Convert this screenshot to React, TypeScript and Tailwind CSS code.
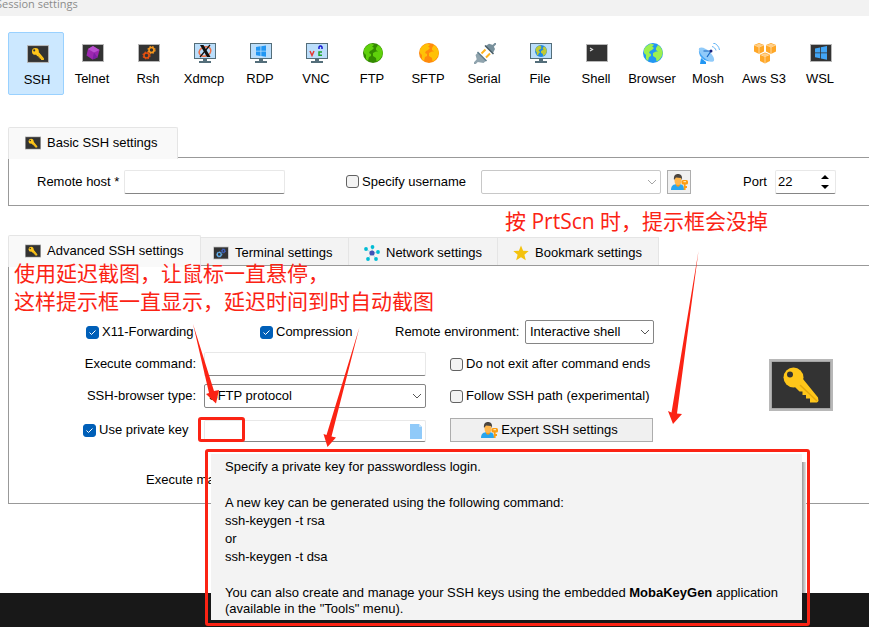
import type { ReactNode } from "react";

const FONT = "font-['Liberation_Sans',Arial,sans-serif]";

/* ---------- icons ---------- */

function KeyIcon({ className }: { className: string }) {
  return (
    <svg viewBox="0 0 64 52" className={className} aria-hidden="true">
      <rect width="64" height="52" fill="#b8b8b8" />
      <rect x="2.500" y="2.500" width="59" height="47" fill="#8f8f8f" />
      <rect x="3" y="3" width="58" height="46" fill="#333" />
      <path d="M26 28l8-8 15 18.500 .5 3.500-1.500 1.500h-7v-4h-4v-3.500h-3.500v-3.500h-3z" fill="#ffc61a" />
      <path d="M31 26l17 16" stroke="#e3a80f" strokeWidth="1.500" />
      <circle cx="24.500" cy="18.500" r="10" fill="#ffc61a" />
      <circle cx="21" cy="15.500" r="3" fill="#333" />
    </svg>
  );
}

function Screen({ children }: { children?: ReactNode }) {
  return (
    <>
      <rect x="0" y="1" width="22" height="18" fill="#b8b8b8" />
      <rect x="1" y="2" width="20" height="16" fill="#333" />
      {children}
    </>
  );
}

function Monitor({ children }: { children?: ReactNode }) {
  return (
    <>
      <rect x="0" y="0" width="22" height="16" fill="#546e7a" />
      <rect x="1" y="1" width="20" height="14" fill="#bbdefb" />
      {children}
      <path d="M9 16h4v2h4v2H5v-2h4z" fill="#546e7a" />
    </>
  );
}

function Gear({ x, y, r, color }: { x: number; y: number; r: number; color: string }) {
  return (
    <>
      <circle cx={x} cy={y} r={r} fill="none" stroke={color} strokeWidth="1.600" />
      <circle cx={x} cy={y} r={r + 1} fill="none" stroke={color} strokeWidth="1.200" strokeDasharray="1.500 1.300" />
    </>
  );
}

function Globe({ x, y, r, sea, land }: { x: number; y: number; r: number; sea: string; land: string }) {
  return (
    <g transform={`translate(${x} ${y}) scale(${r / 10})`}>
      <circle r="10" fill={sea} />
      <path
        d="M-9-3.500C-8-6 -5-8.500-2-9.200L1-8.500 0-7-1-6.500 1-5-1-3-3-2-4 0-2 1-2 3-4 4-5 8-7 6-7 2-9 0zM3-5L5-8C8-6.500 9.500-3 9.800 0L8.500 4 6 7 3.500 8.500 3 5 0 3 0 0 3-1.500 5-1.500 3-3z"
        fill={land}
      />
    </g>
  );
}

function WinLogo({ color }: { color: string }) {
  return (
    <path
      d="M6 5l4.500-.7v4.400H6zM11.300 4.200L16 3.500v5.200h-4.700zM6 9.500h4.500v4.400L6 13.200zM11.300 9.500H16v5.200l-4.700-.7z"
      fill={color}
    />
  );
}

function Cube({ x, y }: { x: number; y: number }) {
  return (
    <g transform={`translate(${x} ${y})`}>
      <path d="M5 0l5 2v6.500l-5 2.500-5-2.500V2z" fill="#ffa726" />
      <path d="M5 .7l3.700 1.400L5 3.500 1.300 2.100z" fill="#ffd08a" />
      <path d="M0 2l5 2v7M10 2L5 4" fill="none" stroke="#ffe9cc" strokeWidth=".7" />
    </g>
  );
}

const icons: Record<string, ReactNode> = {
  Telnet: (
    <Screen>
      <path d="M11 3l6.500 4-2 7.500-5 2-6-4 1.500-6.500z" fill="#9c27b0" />
      <path d="M11 3l6.500 4-5.500 2.500L6 6z" fill="#ba4fd0" />
      <path d="M12 9.500l3.500 5-5 2z" fill="#7b1fa2" />
    </Screen>
  ),
  Rsh: (
    <Screen>
      <Gear x={13.500} y={7} r={2.500} color="#f9981d" />
      <Gear x={8.500} y={12.500} r={2.500} color="#e2500f" />
    </Screen>
  ),
  Xdmcp: (
    <Monitor>
      <ellipse cx="11" cy="8.500" rx="6" ry="4.500" fill="none" stroke="#ee7048" strokeWidth="1.500" transform="rotate(-20 11 8.500)" />
      <path d="M6 2h3.500l7 12H13z" fill="#111" />
      <path d="M16 2L6 14" stroke="#111" strokeWidth="1.200" />
    </Monitor>
  ),
  RDP: (
    <Monitor>
      <g transform="translate(0 -1)">
        <WinLogo color="#2196f3" />
      </g>
    </Monitor>
  ),
  VNC: (
    <Monitor>
      <path d="M4 8l2 4.500L8 8" fill="none" stroke="#e53935" strokeWidth="1.500" />
      <path d="M13 6V4l1-1h1l1 1v2" fill="none" stroke="#1515d0" strokeWidth="1.500" />
      <path d="M16 9h-3v3.300h3" fill="none" stroke="#1fa32a" strokeWidth="1.500" />
    </Monitor>
  ),
  FTP: <Globe x={11} y={10} r={10} sea="#338a00" land="#5fd00b" />,
  SFTP: <Globe x={11} y={10} r={10} sea="#ff8a0c" land="#ffc107" />,
  Serial: (
    <g>
      <path d="M7.500 10.500l4-4M12 14.500l4-4" stroke="#ffb41f" strokeWidth="2" />
      <path d="M22 0L18 4" stroke="#78909c" strokeWidth="2" />
      <path d="M11.500 3L15 .8l4 1.200 2 4-2 4z" fill="#78909c" />
      <path d="M11 2.500L19.500 11" stroke="#455a64" strokeWidth="1.500" />
      <path d="M0 21l4-4" stroke="#90a4ae" strokeWidth="2.500" />
      <path d="M1.500 12L4 9.500l8.500 8L9.500 20l-6-1z" fill="#90a4ae" />
      <path d="M3.500 9l9 9" stroke="#607d8b" strokeWidth="1.500" />
    </g>
  ),
  File: (
    <Monitor>
      <Globe x={11} y={8} r={6} sea="#1e88e5" land="#c0ca33" />
    </Monitor>
  ),
  Shell: (
    <Screen>
      <path d="M4 5l2.500 1.500L4 8" fill="none" stroke="#ddd" strokeWidth="1.200" />
    </Screen>
  ),
  Browser: <Globe x={11} y={10} r={10} sea="#2196f3" land="#9cf04f" />,
  Mosh: (
    <g>
      <path d="M3 15l5 4v2H2z" fill="#2196f3" />
      <path d="M1.500 5C-1 13 6 20 16 18z" fill="#42a5f5" />
      <ellipse cx="8.500" cy="11.500" rx="9.600" ry="4" transform="rotate(42 8.500 11.500)" fill="#90caf9" />
      <path d="M5.500 8L13 8M9 14l4-6" stroke="#1565c0" strokeWidth="1.200" />
      <circle cx="13" cy="8" r="1.500" fill="#1a237e" />
      <path d="M14 3.500c2 .5 3.500 2 4 4M15 0c3.500 .5 6 3.500 6.500 7" fill="none" stroke="#64b5f6" strokeWidth="1" />
    </g>
  ),
  "Aws S3": (
    <g>
      <Cube x={0} y={0} />
      <Cube x={12} y={0} />
      <Cube x={6} y={9.500} />
    </g>
  ),
  WSL: (
    <Screen>
      <path d="M5 5.500l5-1v5H5zM10.800 4.200L17 3v6.500h-6.200zM5 10.300h5v5l-5-1zM10.800 10.300H17v6.500l-6.200-1.200z" fill="#42a5f5" />
    </Screen>
  ),
};

function UserKeyIcon() {
  return (
    <svg viewBox="0 0 17 16" className="h-4 w-[17px]" aria-hidden="true">
      <path d="M0 16c0-4 2-6 7-6s6 2 6 6z" fill="#29a5ee" />
      <path d="M5 9h4v2.500l-2 1.500-2-1.500z" fill="#ef9a1c" />
      <ellipse cx="7" cy="6.500" rx="3.500" ry="4.500" fill="#ffb74d" />
      <path d="M3 6C2.500 2 4 0 7 0s4.500 2 4 6l-1-2-5-.500z" fill="#4a4540" />
      <rect x="10.500" y="6" width="6.500" height="4.500" rx="1.500" fill="#fb9d12" />
      <path d="M13.700 10v6M14 13h2" stroke="#fb9d12" strokeWidth="1.800" />
      <path d="M12.500 7.700h2.500" stroke="#fff3d0" strokeWidth="1" />
    </svg>
  );
}

function Chevron({ className }: { className: string }) {
  return (
    <svg viewBox="0 0 10 6" className={`pointer-events-none mr-1 h-[6px] w-[10px] self-center justify-self-end [grid-area:1/1] ${className}`} aria-hidden="true">
      <path d="M1 1l4 4 4-4" fill="none" stroke="currentColor" />
    </svg>
  );
}

/* ---------- controls ---------- */

function Check({ label, checked = false }: { label: string; checked?: boolean }) {
  return (
    <label className="flex items-center gap-[3px] whitespace-nowrap">
      <span className="grid">
        <input
          type="checkbox"
          defaultChecked={checked}
          className="peer size-[13px] appearance-none rounded-[3px] border border-[#626262] bg-[#f3f3f3] [grid-area:1/1] checked:border-[#005fb8] checked:bg-[#005fb8]"
        />
        <svg viewBox="0 0 13 13" className="pointer-events-none hidden size-[13px] [grid-area:1/1] peer-checked:block" aria-hidden="true">
          <path d="M3.500 6.500l2 2 4-4" fill="none" stroke="#fff" />
        </svg>
      </span>
      {label}
    </label>
  );
}

function Select({ id, label, value, className, muted = false }: { id: string; label: string; value: string; className: string; muted?: boolean }) {
  return (
    <span className={`grid ${className}`}>
      <select
        id={id}
        aria-label={label}
        className={`h-6 w-full appearance-none rounded-[2px] border bg-white pl-1 pb-px [grid-area:1/1] ${muted ? "border-[#c8c8c8]" : "border-[#858585]"}`}
      >
        <option>{value}</option>
      </select>
      <Chevron className={muted ? "text-[#a5a5a5]" : "text-[#555]"} />
    </span>
  );
}

const FIELD = "rounded-[2px] border border-[#e8e8e8] border-b-[#858585] bg-white px-[2px]";

function Tab({ icon, children, active = false, className }: { icon: ReactNode; children: ReactNode; active?: boolean; className: string }) {
  return (
    <button
      type="button"
      role="tab"
      aria-selected={active}
      className={`flex items-center gap-[6px] whitespace-nowrap border-[#e5e5e5] ${
        active ? "z-10 -mb-[2px] h-8 rounded-t-[2px] border border-b-0 bg-[#f9f9f9] pb-[2px] pl-4" : "h-7 border-t border-r bg-[#f3f3f3] pt-[2px] pl-3"
      } ${className}`}
    >
      {icon}
      {children}
    </button>
  );
}

const protocols = ["SSH", "Telnet", "Rsh", "Xdmcp", "RDP", "VNC", "FTP", "SFTP", "Serial", "File", "Shell", "Browser", "Mosh", "Aws S3", "WSL"];

const RED = "text-[#fb2314]";

export default function App() {
  return (
    <div className={`relative flex min-h-screen flex-col overflow-hidden bg-white text-[13px] leading-4 text-black ${FONT}`}>
      <header className="flex h-4 items-end overflow-hidden bg-[#f2f2f2] pb-1 text-[#8c8c8c]">
        <h1 className="-ml-1 font-['Open_Sans','Noto_Sans',sans-serif] text-[11px] leading-4">Session settings</h1>
      </header>

      <nav className="mt-4 flex pl-2">
        {protocols.map((name) => (
          <button
            key={name}
            type="button"
            className={`flex h-[63px] w-14 shrink-0 flex-col items-center whitespace-nowrap rounded-[2px] border ${
              name === "SSH" ? "border-[#99d1ff] bg-[#cce8ff] pt-3 pl-[2px]" : "border-transparent pt-[10px]"
            }`}
          >
            {name === "SSH" ? (
              <KeyIcon className="ml-[2px] h-[18px] w-[22px]" />
            ) : (
              <svg viewBox="0 0 22 21" className="ml-[2px] h-[21px] w-[22px] shrink-0" aria-hidden="true">
                {icons[name]}
              </svg>
            )}
            <span className={name === "SSH" ? "mt-[9px]" : "mt-[7px]"}>{name}</span>
          </button>
        ))}
      </nav>

      <section className="mt-8 pl-2">
        <div role="tablist" className="flex items-end">
          <Tab active icon={<KeyIcon className="h-[14px] w-4" />} className="w-[170px]">
            Basic SSH settings
          </Tab>
        </div>
        <div className="flex h-[49px] items-center border border-r-0 border-[#999] pl-7">
          <label htmlFor="host" className="w-[87px] whitespace-nowrap">
            Remote host *
          </label>
          <input id="host" type="text" className={`h-6 w-[161px] ${FIELD}`} />
          <div className="ml-[61px] w-[135px]">
            <Check label="Specify username" />
          </div>
          <Select id="user" label="Username" value="" muted className="w-[180px]" />
          <button type="button" aria-label="Manage users" className="ml-[6px] grid size-6 place-items-center border border-[#adadad] bg-[#f0f0f0]">
            <UserKeyIcon />
          </button>
          <label htmlFor="port" className="ml-[52px] w-8">
            Port
          </label>
          <span className="grid w-[61px]">
            <input id="port" type="text" defaultValue="22" className={`h-6 w-full [grid-area:1/1] ${FIELD}`} />
            <svg viewBox="0 0 8 16" className="mr-[7px] h-4 w-2 self-center justify-self-end [grid-area:1/1]" aria-hidden="true">
              <path d="M4 1l4 4H0zM4 15l4-4H0z" />
            </svg>
          </span>
        </div>
      </section>

      <section className="mt-[29px] pl-2">
        <div role="tablist" className="flex items-end">
          <Tab active icon={<KeyIcon className="h-[14px] w-4" />} className="w-[193px]">
            Advanced SSH settings
          </Tab>
          <Tab
            className="w-[148px]"
            icon={
              <svg viewBox="0 0 22 20" className="h-[14px] w-4" aria-hidden="true">
                <Screen>
                  <Gear x={14.500} y={7} r={2} color="#3f63c5" />
                  <Gear x={8.500} y={12} r={2.800} color="#64b5f6" />
                </Screen>
              </svg>
            }
          >
            Terminal settings
          </Tab>
          <Tab
            className="w-[149px] pl-[15px]"
            icon={
              <svg viewBox="0 0 16 16" className="size-4" aria-hidden="true">
                <path d="M8 8L2 4M8 8l.5-6M8 8l6-1M8 8l4 6M8 8l-4 6" stroke="#b2dfe8" />
                <circle cx="8" cy="8" r="2.600" fill="#3f51b5" />
                <g fill="#00bcd4">
                  <circle cx="2" cy="4" r="1.900" />
                  <circle cx="8.500" cy="2" r="1.900" />
                  <circle cx="14" cy="7" r="1.900" />
                  <circle cx="12" cy="14" r="1.900" />
                  <circle cx="4" cy="14" r="1.900" />
                </g>
              </svg>
            }
          >
            Network settings
          </Tab>
          <Tab
            className="w-[161px] pl-[15px]"
            icon={
              <svg viewBox="0 0 16 16" className="size-4" aria-hidden="true">
                <path d="M8 .5l2.100 5.200 5.600.4-4.300 3.600 1.400 5.600L8 12.200l-4.800 3.100 1.400-5.600L.3 6.100l5.600-.4z" fill="#f4c20d" />
              </svg>
            }
          >
            Bookmark settings
          </Tab>
        </div>
        <div className="flex items-start border border-r-0 border-[#999] pt-[54px] pb-[11px] pl-[74px]">
          <div className="w-[571px]">
            <div className="flex h-6 items-center pl-[3px]">
              <div className="w-[174px]">
                <Check checked label="X11-Forwarding" />
              </div>
              <div className="w-[135px]">
                <Check checked label="Compression" />
              </div>
              <label htmlFor="env" className="w-[130px] whitespace-nowrap">
                Remote environment:
              </label>
              <Select id="env" label="Remote environment" value="Interactive shell" className="w-[129px]" />
            </div>
            <div className="mt-2 grid grid-cols-[113px_222px_204px] items-center gap-x-2 gap-y-2">
              <label htmlFor="cmd" className="whitespace-nowrap text-right">
                Execute command:
              </label>
              <input id="cmd" type="text" className={`h-6 ${FIELD}`} />
              <div className="ml-4">
                <Check label="Do not exit after command ends" />
              </div>
              <label htmlFor="browser" className="whitespace-nowrap text-right">
                SSH-browser type:
              </label>
              <Select id="browser" label="SSH-browser type" value="SFTP protocol" className="w-full" />
              <div className="ml-4">
                <Check label="Follow SSH path (experimental)" />
              </div>
            </div>
            <div className="mt-[10px] flex h-6 items-end">
              <div className="flex h-6 w-[121px] items-center">
                <Check checked label="Use private key" />
              </div>
              <span className="grid w-[222px]">
                <input type="text" aria-label="Private key file" className={`h-[22px] w-full [grid-area:1/1] ${FIELD}`} />
                <svg viewBox="0 0 12 15" className="mr-1 h-[15px] w-3 self-center justify-self-end [grid-area:1/1]" aria-hidden="true">
                  <path d="M0 0h9l3 3v12H0z" fill="#90caf9" />
                  <path d="M9 0v3h3z" fill="#c5e3fb" />
                </svg>
              </span>
              <button type="button" className="ml-6 flex h-6 w-[203px] items-center justify-center gap-[3px] border border-[#adadad] bg-[#f0f0f0] pr-1">
                <UserKeyIcon />
                Expert SSH settings
              </button>
            </div>
            <div className="mt-[26px] flex h-6 items-center pl-[63px]">Execute macro:</div>
          </div>
          <button type="button" aria-label="SSH key" className="mt-[39px] ml-[115px]">
            <KeyIcon className="h-[52px] w-16" />
          </button>
        </div>
      </section>

      <footer className="mt-[89px] flex-1 bg-[#181818]" />

      {/* tooltip over the form */}
      <div role="tooltip" className="absolute top-[454px] left-[211px] z-20 w-[591px] bg-[#f3f3f3] px-[14px] pt-1 pb-[3px] leading-[18px]">
        <p>Specify a private key for passwordless login.</p>
        <p className="mt-[18px]">
          A new key can be generated using the following command:
          <br />
          ssh-keygen -t rsa
          <br />
          or
          <br />
          ssh-keygen -t dsa
        </p>
        <p className="mt-[19px] whitespace-nowrap leading-4">
          You can also create and manage your SSH keys using the embedded <b>MobaKeyGen</b> application
          <br />
          (available in the "Tools" menu).
        </p>
        <span className="absolute top-2 left-full h-[131px] w-1 bg-linear-to-r from-[#999] to-[#e5e5e5]" />
      </div>

      {/* annotations */}
      <div className={`pointer-events-none absolute inset-0 z-30 font-['Open_Sans','Noto_Sans_CJK_SC',sans-serif] text-[21px] leading-7 whitespace-nowrap ${RED}`}>
        <p className="absolute top-[207px] left-[505px]">按 PrtScn 时，提示框会没掉</p>
        <p className="absolute top-[259px] left-[14px]">
          使用延迟截图，让鼠标一直悬停，
          <br />
          这样提示框一直显示，延迟时间到时自动截图
        </p>
        <span className="absolute top-[417px] left-[198px] h-[25px] w-[47px] rounded-[3px] border-3 border-current" />
        <span className="absolute top-[449px] left-[205px] h-[177px] w-[605px] rounded-[3px] border-3 border-current" />
        <svg width="869" height="627" className="absolute top-0 left-0" fill="currentColor" aria-hidden="true">
          <path d="M193 324L214 391 219 390 216 403.500 206 394 209 393z" />
          <path d="M359.500 327L331.500 436.500 336 437.500 327.500 447 323.500 434 326.500 435z" />
          <path d="M698.500 251L677 413.500 682 414 673 424 668 411 671.500 412.500z" />
        </svg>
      </div>
    </div>
  );
}
